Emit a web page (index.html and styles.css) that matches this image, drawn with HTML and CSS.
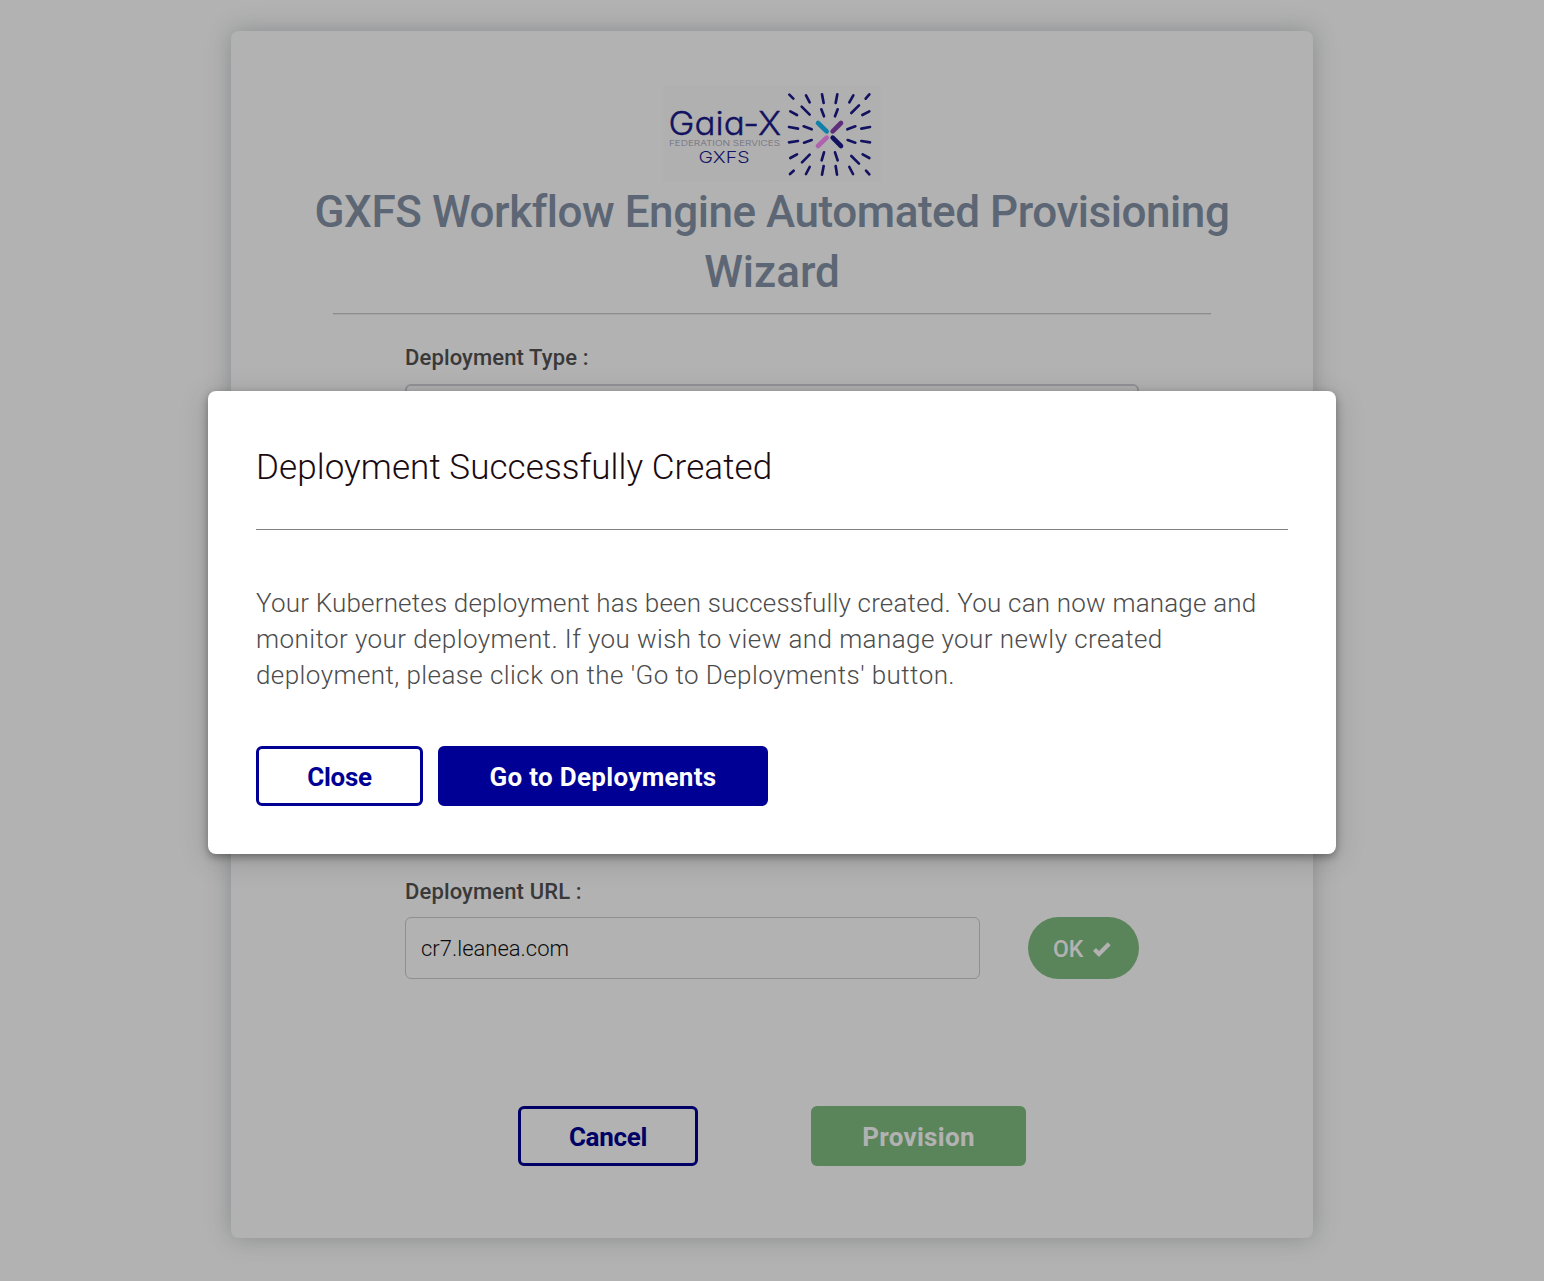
FILE: index.html
```html
<!DOCTYPE html>
<html lang="en">
<head>
<meta charset="utf-8">
<title>GXFS Workflow Engine Automated Provisioning Wizard</title>
<link rel="stylesheet" href="styles.css">
</head>
<body>
<main class="card">
  <svg class="logo" viewBox="0 0 218 96" role="img" aria-label="Gaia-X Federation Services">
    <rect width="218" height="96" fill="#fcfcfc"/>
    <g class="logo-text">
      <text x="5.5" y="50" font-size="33" font-weight="300" stroke="#1a1a8c" stroke-width=".4" textLength="112.5" lengthAdjust="spacingAndGlyphs">Gaia-X</text>
      <text x="6" y="60.5" font-size="7.2" font-weight="300" textLength="111" lengthAdjust="spacingAndGlyphs" class="logo-sub">FEDERATION SERVICES</text>
      <text x="35.5" y="78.3" font-size="16.5" font-weight="300" textLength="51" lengthAdjust="spacingAndGlyphs">GXFS</text>
    </g>
    <g transform="translate(112 -5) scale(.33333)" fill="none" stroke-linecap="round">
      <path stroke="#1a1a8c" stroke-width="8" d="M43 44L55 56M93 46L104 67M141 43L146 69M187 43L182 69M235 46L223 67M283 43L272 56M46 94L66 105M80 80L104 104M139 88L147 109M188 88L180 109M252 76L229 99M283 94L262 105M42 141L69 146M86 139L110 148M241 139L217 148M285 141L259 146M42 187L69 183M87 188L110 180M241 188L218 180M285 187L259 183M46 234L66 223M104 224L81 247M147 217L140 241M180 217L188 241M229 228L252 251M283 234L263 223M45 282L56 272M93 282L104 261M141 284L146 258M186 284L182 258M234 282L223 261M283 283L273 272"/>
      <g stroke-width="14">
        <path stroke="#18b8f4" d="M129 129L155 154"/>
        <path stroke="#8840b0" d="M198 129L173 154"/>
        <path stroke="#fc8cfc" d="M129 198L155 173"/>
        <path stroke="#1a1a8c" d="M173 173L198 198"/>
      </g>
    </g>
  </svg>
  <h1 class="title">GXFS Workflow Engine Automated Provisioning<br><span class="title-end">Wizard</span></h1>
  <hr class="rule">
  <form class="form">
    <label class="label">Deployment Type :</label>
    <div class="select"></div>
    <label class="label label-url">Deployment URL :</label>
    <div class="url-row">
      <div class="input">cr7.leanea.com</div>
      <div class="ok"><span class="ok-text">OK</span>
        <svg width="20" height="16" viewBox="0 0 20 16"><path d="M2.5 8.5L7 13L17.2 2.8" fill="none" stroke="#fff" stroke-width="4.2"/></svg>
      </div>
    </div>
    <div class="actions">
      <button type="button" class="btn outline cancel">Cancel</button>
      <button type="button" class="btn green">Provision</button>
    </div>
  </form>
</main>
<div class="overlay">
  <section class="modal">
    <h2 class="heading">Deployment Successfully Created</h2>
    <p class="message">Your Kubernetes deployment has been successfully created. You can now manage and<br><span class="wide">monitor your deployment. If you wish to view and manage your newly created<br>deployment, please click on the 'Go to Deployments' button.</span></p>
    <div class="modal-actions">
      <button type="button" class="btn outline close">Close</button>
      <button type="button" class="btn primary">Go to Deployments</button>
    </div>
  </section>
</div>
</body>
</html>
```
FILE: styles.css
```css
* { box-sizing: border-box; }
body {
  margin: 0;
  height: 1281px;
  padding-top: 31px;
  overflow: hidden;
  background: #fff;
  font-family: Roboto, "Liberation Sans", sans-serif;
}
.card {
  display: flex;
  flex-direction: column;
  align-items: center;
  width: 1082px;
  height: 1207px;
  margin: 0 auto;
  padding-top: 54px;
  border-radius: 8px;
  background: #fff;
  box-shadow: 0 0 24px rgba(60, 68, 76, .3);
}
.logo { display: block; width: 218px; height: 96px; flex: none; }
.logo-text { font-family: Inter, sans-serif; font-feature-settings: "cv11"; fill: #1a1a8c; }
.logo-sub { fill: #a0a0b4; }
.title {
  margin: 1px 0 0;
  color: #8492a6;
  font-size: 44px;
  font-weight: 500;
  line-height: 60px;
  letter-spacing: -.45px;
  text-align: center;
  white-space: nowrap;
}
.title-end { letter-spacing: 0; }
.rule { width: 878px; height: 2px; margin: 11px 0 0; border: 0; border-top: 1px solid #cacaca; border-bottom: 1px solid #ececec; }
.form { width: 734px; margin-top: 28px; }
.label { display: block; height: 30px; color: #525252; font-size: 22px; font-weight: 500; line-height: 30px; letter-spacing: .13px; }
.select { height: 62px; margin-top: 11px; border: 2px solid #d2d2d8; border-radius: 6px; }
.label-url { margin-top: 431px; }
.url-row { display: flex; justify-content: space-between; height: 62px; margin-top: 10px; }
.input {
  width: 575px;
  padding: 1px 0 0 15px;
  border: 1px solid #cdcdd2;
  border-radius: 6px;
  color: #111;
  font-size: 22px;
  font-weight: 300;
  line-height: 60px;
}
.ok {
  display: flex;
  align-items: center;
  width: 111px;
  padding: 2px 0 0 25px;
  gap: 9px;
  border-radius: 31px;
  background: #82be82;
  color: #fff;
  font-size: 23px;
  font-weight: 500;
}
.actions { display: flex; gap: 113px; margin: 127px 0 0 113px; }
.btn {
  height: 60px;
  padding: 2px 0 0;
  border: 3px solid transparent;
  border-radius: 6px;
  font: 700 26px/52px Roboto, "Liberation Sans", sans-serif;
  letter-spacing: .3px;
  white-space: nowrap;
}
.outline { border-color: #000094; background: transparent; color: #000094; letter-spacing: -.3px; }
.green { width: 215px; border-color: #82be82; background: #82be82; color: #fff; }
.primary { width: 330px; border-color: #000094; background: #000094; color: #fff; }
.cancel { width: 180px; }
.close { width: 167px; }
.overlay {
  position: absolute;
  inset: 0;
  display: flex;
  justify-content: center;
  align-items: flex-start;
  padding-top: 391px;
  background: rgba(0, 0, 0, .3);
}
.modal {
  width: 1128px;
  height: 463px;
  padding: 48px;
  border-radius: 8px;
  background: #fff;
  box-shadow: 0 3px 8px rgba(0, 0, 0, .34), 0 6px 30px rgba(0, 0, 0, .16);
}
.heading {
  height: 91px;
  margin: 0;
  padding-top: 1px;
  border-bottom: 1px solid #808080;
  color: #1a0a10;
  font-size: 35px;
  font-weight: 300;
  line-height: 56px;
  letter-spacing: .08px;
}
.message { margin: 55px 0 0; color: #4c4c4c; font-size: 26px; font-weight: 300; line-height: 36px; letter-spacing: .19px; white-space: nowrap; }
.wide { letter-spacing: .42px; }
.modal-actions { display: flex; gap: 15px; margin-top: 53px; }
```
